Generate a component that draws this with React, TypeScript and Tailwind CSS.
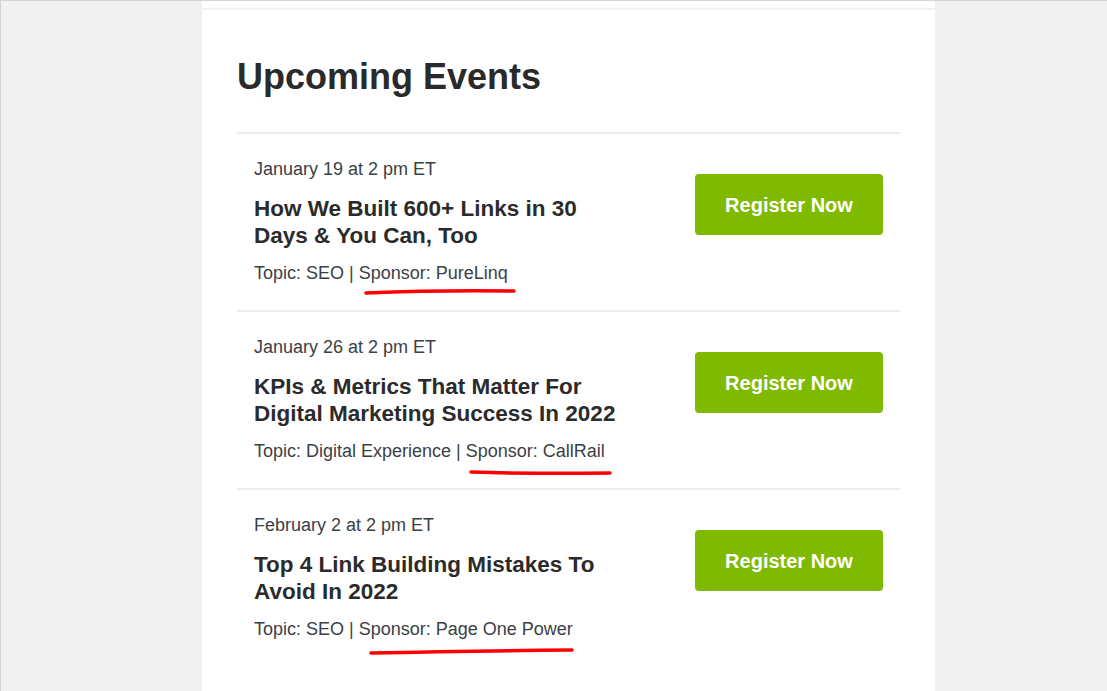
import React from 'react';

type EventItem = {
  date: string;
  title: string;
  topic: string;
  sponsor: string;
  mark: string; // hand-drawn underline path, in row coordinates
};

const events: EventItem[] = [
  {
    date: 'January 19 at 2 pm ET',
    title: 'How We Built 600+ Links in 30 Days & You Can, Too',
    topic: 'SEO',
    sponsor: 'PureLinq',
    mark: 'M129 159 Q 200 156 277 157',
  },
  {
    date: 'January 26 at 2 pm ET',
    title: 'KPIs & Metrics That Matter For Digital Marketing Success In 2022',
    topic: 'Digital Experience',
    sponsor: 'CallRail',
    mark: 'M234 160 Q 300 162 373 161',
  },
  {
    date: 'February 2 at 2 pm ET',
    title: 'Top 4 Link Building Mistakes To Avoid In 2022',
    topic: 'SEO',
    sponsor: 'Page One Power',
    mark: 'M134 163 Q 230 161 335 160',
  },
];

const EventRow: React.FC<{ item: EventItem; last: boolean }> = ({ item, last }) => {
  return (
    <div
      className={`relative flex items-start justify-between px-[17px] pt-[23px] pb-[25px] ${
        last ? '' : 'border-b-2 border-[#ececec]'
      }`}
    >
      <div className="w-[370px]">
        <div className="text-[18px] leading-[24px] text-[#3b4045]">{item.date}</div>
        <h3 className="mt-[14px] text-[22.5px] leading-[27px] font-bold text-[#2b2b2b]">{item.title}</h3>
        <div className="mt-[12px] text-[18px] leading-[24px] text-[#3b4045]">
          Topic: {item.topic} | Sponsor: {item.sponsor}
        </div>
      </div>
      <button className="mt-[17px] flex h-[61px] w-[188px] items-center justify-center rounded-[4px] bg-[#7fba00] text-[20px] font-bold text-white">
        Register Now
      </button>

      {/* red annotation under the sponsor */}
      <svg className="pointer-events-none absolute left-0 top-0 h-full w-full" fill="none">
        <path d={item.mark} stroke="#ff0000" strokeWidth="3.5" strokeLinecap="round" />
      </svg>
    </div>
  );
};

const App: React.FC = () => {
  return (
    <div
      className="flex min-h-[691px] overflow-hidden border-t border-l border-[#d4d4d4] bg-[#f1f1f1] pl-[201px]"
      style={{ fontFamily: '"Liberation Sans", Arial, sans-serif' }}
    >
      <div className="flex w-[733px] flex-col">
        <div className="h-[7px] bg-white" />
        <div className="mt-[2px] flex-1 bg-white px-[35px] pt-[45px]">
          <h2 className="text-[36px] leading-[43px] font-bold text-[#2a2a2a]">Upcoming Events</h2>
          <div className="mt-[34px] border-t-2 border-[#ececec]">
            {events.map((item, i) => (
              <EventRow key={item.title} item={item} last={i === events.length - 1} />
            ))}
          </div>
        </div>
      </div>
    </div>
  );
};

export default App;
